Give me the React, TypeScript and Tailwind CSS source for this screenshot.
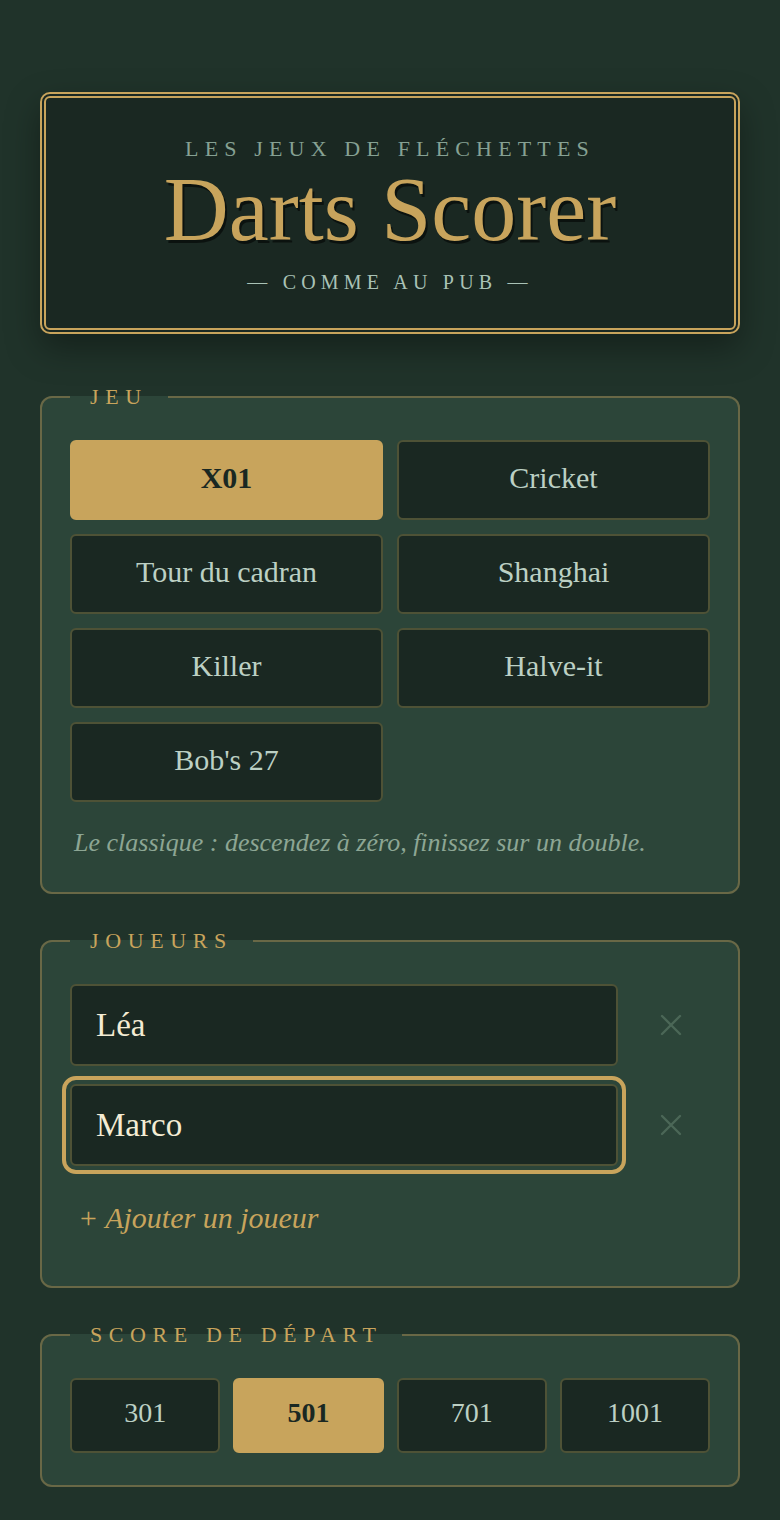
import { useState } from 'react'

const GAMES = ['X01', 'Cricket', 'Tour du cadran', 'Shanghai', 'Killer', 'Halve-it', "Bob's 27"]
const SCORES = [301, 501, 701, 1001]

function Panel({ title, children, className = '' }: { title: string; children: React.ReactNode; className?: string }) {
  return (
    <fieldset
      className={`rounded-[12px] border-2 border-[#696846] bg-[#2c4539] px-[28px] pt-[32px] ${className}`}
    >
      <legend className="px-5 text-[22px] leading-none tracking-[0.3em] text-[#c8a45c]">{title}</legend>
      {children}
    </fieldset>
  )
}

function RemoveIcon() {
  return (
    <svg width="22" height="22" viewBox="0 0 22 22" fill="none" stroke="currentColor" strokeWidth="2.4" strokeLinecap="round">
      <path d="M2 2l18 18M20 2L2 20" />
    </svg>
  )
}

export default function App() {
  const [game, setGame] = useState('X01')
  const [score, setScore] = useState(501)
  const [players, setPlayers] = useState(['Léa', 'Marco'])

  return (
    <div className="min-h-screen bg-[#20332a] px-10 pb-10 pt-[92px] font-['Liberation_Serif','Times_New_Roman',serif]">
      {/* Title plate */}
      <header className="rounded-[10px] border-[6px] border-double border-[#c8a45c] bg-[#1a2822] pb-[36px] pt-[40px] text-center shadow-[0_14px_34px_rgba(0,0,0,0.35)]">
        <p className="text-[22px] leading-none tracking-[0.28em] text-[#86a193]">LES JEUX DE FLÉCHETTES</p>
        <h1 className="mt-[5px] text-[90px] leading-none text-[#c8a45c] [text-shadow:2px_3px_0_rgba(0,0,0,0.55)]">
          Darts Scorer
        </h1>
        <p className="mt-[17px] text-[20px] leading-none tracking-[0.26em] text-[#a9c2b6]">— COMME AU PUB —</p>
      </header>

      <Panel title="JEU" className="mt-[52px] pb-[36px]">
        <div className="grid grid-cols-2 gap-[14px]">
          {GAMES.map((g) => {
            const active = g === game
            return (
              <button
                key={g}
                onClick={() => setGame(g)}
                className={`h-20 rounded-md border-2 pb-1 text-[30px] leading-none ${
                  active
                    ? 'border-[#c8a45c] bg-[#c8a45c] font-bold text-[#1a2822]'
                    : 'border-[#4e5236] bg-[#1a2822] text-[#bcd0c4]'
                }`}
              >
                {g}
              </button>
            )
          })}
        </div>
        <p className="mt-[28px] pl-1 text-[26px] italic leading-none text-[#8da694]">
          Le classique : descendez à zéro, finissez sur un double.
        </p>
      </Panel>

      <Panel title="JOUEURS" className="mt-9 pb-[51px]">
        <div className="flex flex-col gap-[18px]">
          {players.map((p, i) => (
            <div key={i} className="flex items-center gap-[14px]">
              <input
                value={p}
                onChange={(e) => setPlayers(players.map((q, j) => (j === i ? e.target.value : q)))}
                className={`h-[82px] min-w-0 flex-1 rounded-md border-2 border-[#4e5236] bg-[#1a2822] px-6 text-[33px] text-[#f4ecd4] outline-none ${
                  i === 1 ? 'outline-[4px] outline-offset-[4px] outline-[#c8a45c] outline-solid' : ''
                }`}
              />
              <button
                onClick={() => setPlayers(players.filter((_, j) => j !== i))}
                className="flex h-[82px] w-[78px] items-center justify-center text-[#4b6757]"
                aria-label="Retirer"
              >
                <RemoveIcon />
              </button>
            </div>
          ))}
        </div>
        <button
          onClick={() => setPlayers([...players, ''])}
          className="mt-[37px] px-2 text-[30px] italic leading-none text-[#c8a45c]"
        >
          + Ajouter un joueur
        </button>
      </Panel>

      <Panel title="SCORE DE DÉPART" className="mt-9 pb-[32px]">
        <div className="grid grid-cols-4 gap-[13px]">
          {SCORES.map((s) => {
            const active = s === score
            return (
              <button
                key={s}
                onClick={() => setScore(s)}
                className={`h-[75px] rounded-md border-2 pb-[6px] text-[28px] leading-none ${
                  active
                    ? 'border-[#c8a45c] bg-[#c8a45c] font-bold text-[#1a2822]'
                    : 'border-[#4e5236] bg-[#1a2822] text-[#bcd0c4]'
                }`}
              >
                {s}
              </button>
            )
          })}
        </div>
      </Panel>
    </div>
  )
}
